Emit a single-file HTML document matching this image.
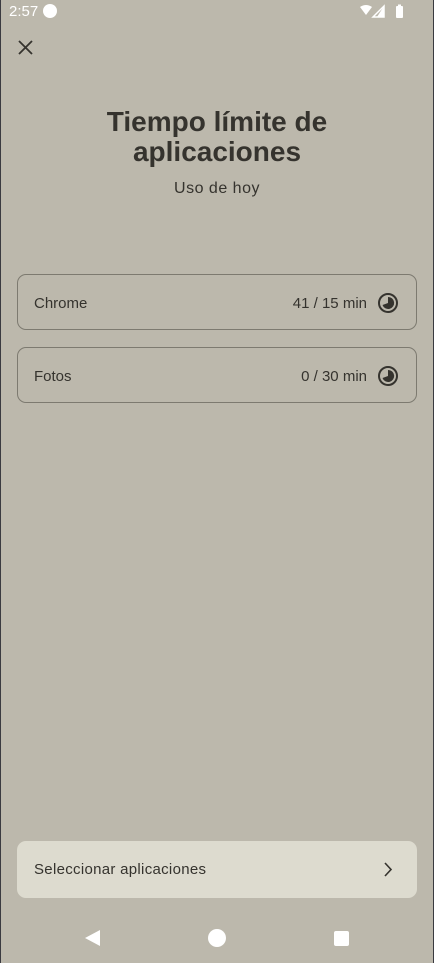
<!DOCTYPE html>
<html><head><meta charset="utf-8"><style>
*{margin:0;padding:0;box-sizing:border-box}
html,body{width:434px;height:963px;overflow:hidden}
body{background:#bcb8ac;font-family:"Liberation Sans",sans-serif;color:#35332e;position:relative}
.edge{position:absolute;top:0;width:1px;height:963px;background:#3a3a40}
.abs{position:absolute}
.card{position:absolute;left:17px;width:400px;height:56px;border:1px solid #7d7a70;border-radius:9px}
.card .l{position:absolute;left:16px;top:20px;font-size:15px}
.card .r{position:absolute;right:49px;top:20px;font-size:15px}
.card svg{position:absolute;right:17px;top:17px}
</style></head><body>
<div class="edge" style="left:0"></div><div class="edge" style="right:0"></div>
<div class="abs" style="left:9px;top:3px;color:#fff;font-size:15px">2:57</div>
<div class="abs" style="left:43px;top:4px;width:14px;height:14px;border-radius:50%;background:#fff"></div>
<svg class="abs" style="left:360px;top:4px" width="50" height="14" viewBox="0 0 50 14">
<path d="M0 3 Q6 -1 12 3 L6 11Z" fill="#fff"/>
<path d="M24 2 L24 13 L13 13Z" fill="none" stroke="#fff" stroke-width="1.5"/>
<path d="M24 2 L24 13 L17 13Z" fill="#fff"/>
<rect x="36" y="2" width="7" height="12" rx="1" fill="#fff"/><rect x="38" y="0.5" width="3" height="2" fill="#fff"/>
</svg>
<svg class="abs" style="left:18px;top:40px" width="15" height="15" viewBox="0 0 15 15"><path d="M1 1L14 14M14 1L1 14" stroke="#35332e" stroke-width="1.8"/></svg>
<div class="abs" style="left:0;width:434px;top:107px;text-align:center;font-size:28px;font-weight:bold;line-height:30px;color:#35332e;letter-spacing:0">Tiempo límite de<br>aplicaciones</div>
<div class="abs" style="left:0;width:434px;top:180px;text-align:center;font-size:16px;letter-spacing:0.5px">Uso de hoy</div>
<div class="card" style="top:274px"><span class="l">Chrome</span><span class="r">41 / 15 min</span>
<svg width="22" height="22" viewBox="0 0 22 22"><circle cx="11" cy="11" r="9" fill="none" stroke="#35332e" stroke-width="2"/><path d="M11 5 A6 6 0 1 1 5.5 13 L11 11Z" fill="#35332e"/></svg></div>
<div class="card" style="top:347px"><span class="l">Fotos</span><span class="r">0 / 30 min</span>
<svg width="22" height="22" viewBox="0 0 22 22"><circle cx="11" cy="11" r="9" fill="none" stroke="#35332e" stroke-width="2"/><path d="M11 5 A6 6 0 1 1 5.5 13 L11 11Z" fill="#35332e"/></svg></div>
<div class="abs" style="left:17px;top:841px;width:400px;height:57px;background:#dddbcf;border-radius:9px">
<span class="abs" style="left:17px;top:20px;font-size:15px;letter-spacing:0.3px">Seleccionar aplicaciones</span>
<svg class="abs" style="left:366px;top:21px" width="10" height="15" viewBox="0 0 10 15"><path d="M2 1L8 7.5L2 14" fill="none" stroke="#35332e" stroke-width="1.6"/></svg>
</div>
<svg class="abs" style="left:84px;top:929px" width="17" height="18" viewBox="0 0 17 18"><path d="M16 1L16 17L1 9Z" fill="#fff"/></svg>
<div class="abs" style="left:208px;top:929px;width:18px;height:18px;border-radius:50%;background:#fff"></div>
<div class="abs" style="left:334px;top:931px;width:15px;height:15px;border-radius:2px;background:#fff"></div>
</body></html>
